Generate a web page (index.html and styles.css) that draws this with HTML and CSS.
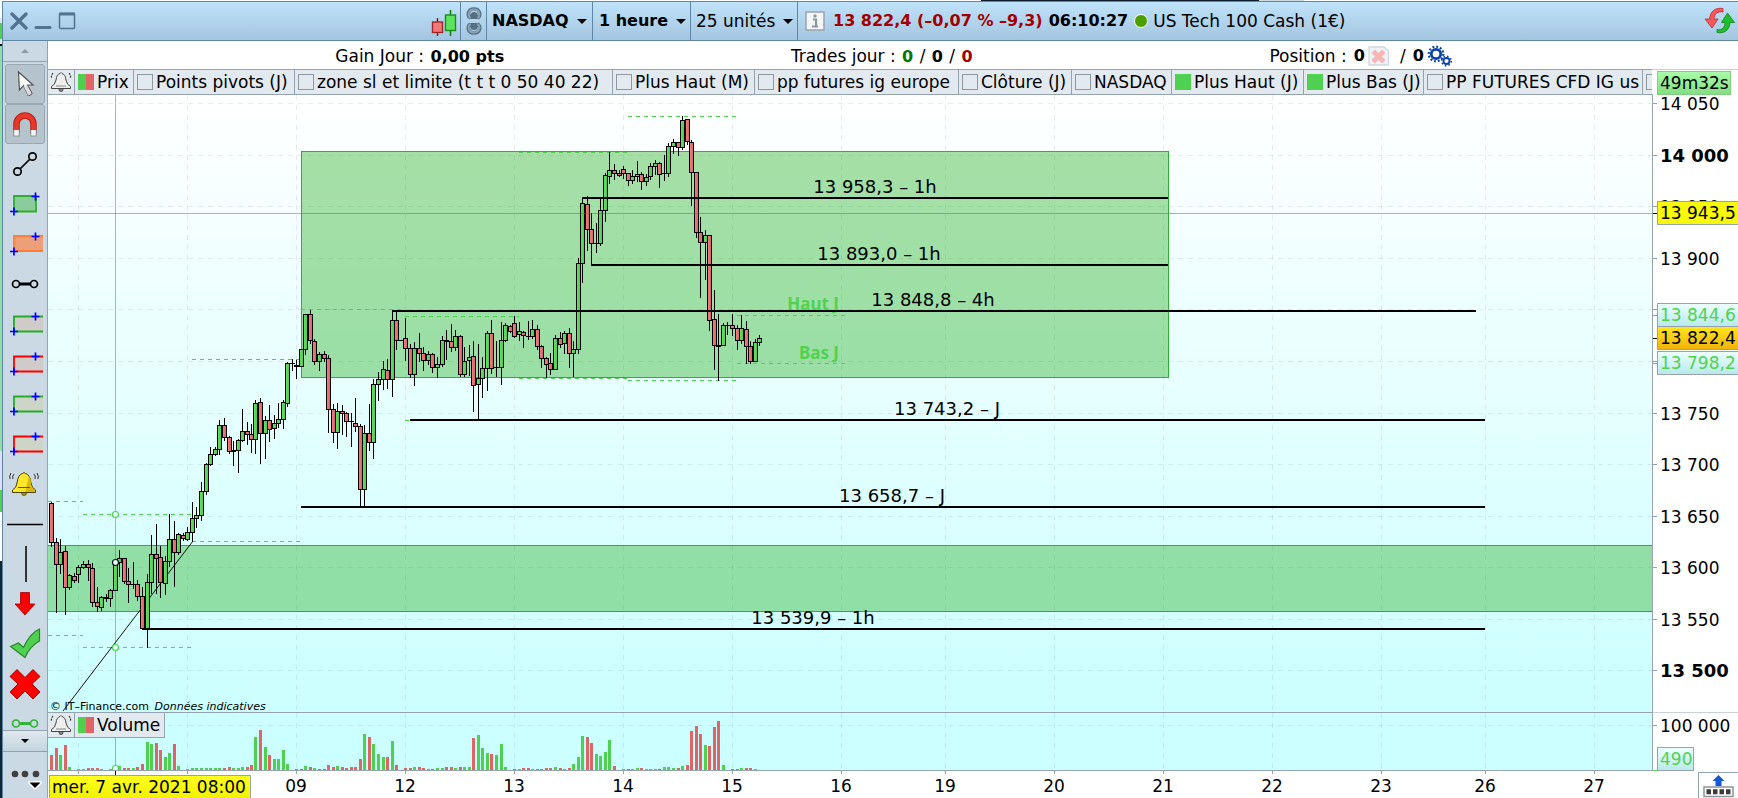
FILE: index.html
```html
<!DOCTYPE html>
<html lang="fr">
<head>
<meta charset="utf-8">
<title>NASDAQ - 1 heure</title>
<link rel="stylesheet" href="styles.css">
</head>
<body>
<div class="window">
  <header class="titlebar">
    <div class="window-controls">
      <button class="plain" aria-label="Fermer"><svg width="18" height="18"><path d="M2 2L16 16M16 2L2 16" stroke="#50748f" stroke-width="3.4" stroke-linecap="round"/></svg></button>
      <button class="plain" aria-label="Réduire"><svg width="18" height="18"><path d="M2 15.500H16" stroke="#50748f" stroke-width="3" stroke-linecap="round"/></svg></button>
      <button class="plain" aria-label="Agrandir"><svg width="18" height="18"><rect x="1.500" y="1.500" width="15" height="15" rx="1" fill="none" stroke="#50748f" stroke-width="1.500"/><path d="M1 2H17" stroke="#50748f" stroke-width="3"/></svg></button>
    </div>
    <button class="plain style-button" aria-label="Style du graphique"><svg width="26" height="28"><path d="M6.500 9V27" stroke="#8c1a1a" stroke-width="1.500"/><path d="M19.500 1V27" stroke="#128012" stroke-width="1.600"/><rect x="1.500" y="13" width="10" height="10.500" fill="#f07878" stroke="#a32626" stroke-width="1.400"/><rect x="14.500" y="6" width="10" height="15.500" fill="#5ee35e" stroke="#169016" stroke-width="1.400"/></svg></button>
    <button class="plain cell link-cell" aria-label="Lier"><svg width="16" height="30" fill="none"><path d="M4.500 12C1 10 1.500 3 8 3s7 7 3.500 9M6.200 13V9.500a1.800 1.800 0 0 1 3.600 0V13" stroke="#566f82" stroke-width="3.600"/><path d="M4.500 12C1.500 10 2 3.500 8 3.500s6.500 6.500 3.500 8.500" stroke="#8aa3b5" stroke-width="2"/><path d="M4.500 18C1 20 1.500 27 8 27s7-7 3.500-9M6.200 17v3.500a1.800 1.800 0 0 0 3.600 0V17" stroke="#566f82" stroke-width="3.600"/><path d="M4.500 18C1.500 20 2 26.500 8 26.500s6.500-6.500 3.500-8.500" stroke="#8aa3b5" stroke-width="2"/></svg></button>
    <button class="plain cell bold symbol-cell">NASDAQ<i class="caret"></i></button>
    <button class="plain cell bold period-cell">1 heure<i class="caret"></i></button>
    <button class="plain cell units-cell">25 unités<i class="caret"></i></button>
    <div class="cell quote">
      <button class="plain" aria-label="Informations"><svg width="20" height="20"><rect x="1" y="1" width="18" height="18" fill="#f4f5f6" stroke="#9aa4aa" stroke-width="1.500"/><path d="M8 8.500h3v7M7 15.500h6" fill="none" stroke="#8a979f" stroke-width="2.200"/><circle cx="10" cy="5" r="1.700" fill="#8a979f"/></svg></button>
      <span class="bold down">13 822,4 (–0,07 % –9,3)</span>
      <span class="bold">06:10:27</span>
      <span class="status"></span>
      <span>US Tech 100 Cash (1€)</span>
    </div>
    <button class="plain refresh" aria-label="Actualiser"><svg width="32" height="28"><path d="M19 1.500C11 0 6 5 5.500 12H1l7 9 6-9H10c0-5 4-8 9-7z" fill="#f4585c" stroke="#c8262e" stroke-width=".8"/><path d="M13 25.500c8 1.500 12.500-3 13-10h4.500l-7-9.500-6 9.500H21c0 5-3 8-8 7z" fill="#1fbf2c" stroke="#10801a" stroke-width=".8"/></svg></button>
  </header>

  <div class="main">
    <nav class="tools" aria-label="Outils">
      <button class="plain scroll-up" aria-label="Monter"><i class="up"></i></button>
      <div class="tool-list">
        <button class="plain tool on" aria-label="Pointeur"><svg width="40" height="40"><path d="M13.500 8l1 18 4-4.500 4.500 9.500q2 1 4-1.500L22.500 21h5.500z" fill="#fff" stroke="#555" stroke-width="1.200"/><path d="M18.500 22l4.500 9 3.500-1.500-4.500-8.500z" fill="#ddd"/></svg></button>
        <button class="plain tool on" aria-label="Aimant"><svg width="40" height="40" fill="none"><path d="M11.500 29V20a8.500 8.500 0 0 1 17 0v9" stroke="#b51d12" stroke-width="6.500"/><path d="M11.500 28V20a8.500 8.500 0 0 1 17 0v8" stroke="#e8382b" stroke-width="4.500"/><path d="M11.500 26v6.500M28.500 26v6.500" stroke="#8d9499" stroke-width="6.500"/><path d="M11.500 26v5.500M28.500 26v5.500" stroke="#f5f5f5" stroke-width="4.500"/></svg></button>
        <button class="plain tool" aria-label="Segment"><svg width="40" height="40" fill="none" stroke="#000" stroke-width="1.700"><path d="M15.500 24.500L24.500 15.500"/><circle cx="12.500" cy="27.500" r="3.700"/><circle cx="27.500" cy="12.500" r="3.700"/></svg></button>
        <button class="plain tool" aria-label="Rectangle vert"><svg width="40" height="40"><path d="M9 12H31V27.500H9z" fill="#8ccb9b" stroke="#2eae2e" stroke-width="1.800"/><path d="M5 27.500h8M9 23.500v8M26.500 12.500h8M30.500 8.500v8" stroke="#00f" stroke-width="1.700"/></svg></button>
        <button class="plain tool" aria-label="Zone orange"><svg width="40" height="40"><path d="M9 12H38V27H9z" fill="#ed9f7a"/><path d="M38 12H9V27H38" fill="none" stroke="#ff7d35" stroke-width="1.800"/><path d="M5 27.500h8M9 23.500v8M26.500 12.500h8M30.500 8.500v8" stroke="#00f" stroke-width="1.700"/></svg></button>
        <button class="plain tool" aria-label="Segment horizontal"><svg width="40" height="40" fill="none" stroke="#000"><path d="M14.500 20H25" stroke-width="3"/><circle cx="11" cy="20" r="3.500" stroke-width="1.700"/><circle cx="29" cy="20" r="3.500" stroke-width="1.700"/></svg></button>
        <button class="plain tool" aria-label="Zone verte 1"><svg width="40" height="40"><path d="M38 12.500H9V27.500H38" fill="#cfcbc8" stroke="#25ad25" stroke-width="1.800"/><path d="M5 27.500h8M9 23.500v8M26.500 12.500h8M30.500 8.500v8" stroke="#00f" stroke-width="1.700"/></svg></button>
        <button class="plain tool" aria-label="Zone rouge 1"><svg width="40" height="40"><path d="M38 12.500H9V27.500H38" fill="#cfcbc8" stroke="#f00" stroke-width="1.800"/><path d="M5 27.500h8M9 23.500v8M26.500 12.500h8M30.500 8.500v8" stroke="#00f" stroke-width="1.700"/></svg></button>
        <button class="plain tool" aria-label="Zone verte 2"><svg width="40" height="40"><path d="M38 12.500H9V27.500H38" fill="#cdd5c6" stroke="#25ad25" stroke-width="1.800"/><path d="M5 27.500h8M9 23.500v8M26.500 12.500h8M30.500 8.500v8" stroke="#00f" stroke-width="1.700"/></svg></button>
        <button class="plain tool" aria-label="Zone rouge 2"><svg width="40" height="40"><path d="M38 12.500H9V27.500H38" fill="#cdd5c6" stroke="#f00" stroke-width="1.800"/><path d="M5 27.500h8M9 23.500v8M26.500 12.500h8M30.500 8.500v8" stroke="#00f" stroke-width="1.700"/></svg></button>
        <button class="plain tool" aria-label="Alerte"><svg width="40" height="40"><circle cx="19" cy="29" r="2.500" fill="#a8920c" stroke="#554900" stroke-width=".7"/><path d="M7.500 28.500V26q4-2 4.500-7 1-8.500 5.500-9.500 1.500-2 3 0 4.500 1 5.500 9.500.500 5 4.500 7v2.500z" fill="#ffe629" stroke="#4d4300" stroke-width="1"/><path d="M24 12q2 3 2 8 .500 4 4 6v2H20z" fill="#d8b90d"/><path d="M13 23.500H25" stroke="#665900"/><path d="M6 9q-2 3-1 6M9 10q-2 2-1 5M32 9q2 3 1 6M29 10q2 2 1 5" fill="none" stroke="#333" stroke-width="1"/></svg></button>
        <button class="plain tool" aria-label="Ligne horizontale"><svg width="40" height="40"><path d="M2 20.500H38" stroke="#000" stroke-width="1.500"/></svg></button>
        <button class="plain tool" aria-label="Ligne verticale"><svg width="40" height="40"><path d="M21 2V38" stroke="#000" stroke-width="1.500"/></svg></button>
        <button class="plain tool" aria-label="Flèche"><svg width="40" height="40"><path d="M15.500 8.500h9V20H30l-10 11L10 20h5.500z" fill="#f80000" stroke="#a00000" stroke-width=".8"/></svg></button>
        <button class="plain tool" aria-label="Valider"><svg width="40" height="40"><path d="M5.500 22.500l8-3.500 5 4.500Q25 9 34.500 5v12Q25 22 20 33.500z" fill="#4fd04f" stroke="#27862b" stroke-width="1.200"/></svg></button>
        <button class="plain tool" aria-label="Supprimer"><svg width="40" height="40"><path d="M12 5.500l8 8 8-8 7 7-8 7.500 8 8-7 7-8-8-8 8-7-7 8-8-8-7.500z" fill="#f00" stroke="#900" stroke-width=".9"/></svg></button>
        <button class="plain tool" aria-label="Segment vert"><svg width="40" height="40" fill="none" stroke="#34b437"><path d="M14.500 19.500H25" stroke-width="3"/><circle cx="11" cy="19.500" r="3.500" stroke-width="1.700"/><circle cx="29" cy="19.500" r="3.500" stroke-width="1.700"/></svg></button>
      </div>
      <button class="plain scroll-down" aria-label="Descendre"><i class="caret small"></i></button>
      <button class="plain more" aria-label="Plus d'outils"><svg width="44" height="46"><g fill="#404040"><circle cx="12" cy="22" r="3.300"/><circle cx="22" cy="22" r="3.300"/><circle cx="33" cy="22" r="3.300"/></g><path d="M26.500 30.500h11l-5.500 5.500z" fill="#000" stroke="#fff" stroke-width="3" paint-order="stroke" stroke-linejoin="round"/></svg></button>
    </nav>

    <section class="content">
      <div class="summary">
        <div>Gain Jour : <b>0,00 pts</b></div>
        <div>Trades jour : <b class="up-count">0</b> / <b>0</b> / <b class="down-count">0</b></div>
        <div class="position">Position : <b>0</b>
          <button class="plain" aria-label="Fermer la position"><svg width="22" height="20"><path d="M1 1h15l4.500 4v14H1z" fill="#eef3f7" stroke="#cdd9e2" stroke-width="1.300"/><path d="M7 3.500l3.500 3.500 3.500-3.500 3.500 3.500L14 10.500l3.500 3.500-3.500 3.500-3.500-3.500L7 17.500 3.500 14 7 10.500 3.500 7z" fill="#fab4b4"/></svg></button>
          <span class="slash">/</span><b>0</b>
          <button class="plain" aria-label="Réglages"><svg width="26" height="22" fill="none" stroke="#0b43a8"><circle cx="9" cy="9" r="4.700" stroke-width="2.800"/><circle cx="9" cy="9" r="7.300" stroke-width="2.200" stroke-dasharray="1.900 1.920"/><circle cx="19.500" cy="16" r="3" stroke-width="1.800"/><circle cx="19.500" cy="16" r="4.700" stroke-width="1.700" stroke-dasharray="1.500 2.190"/></svg></button>
        </div>
      </div>

      <div class="board">
        <div class="left">
          <div class="tabs">
            <button class="plain tab bell" aria-label="Alerte prix"><svg width="24" height="24"><use href="#bell"/></svg></button>
            <label class="tab"><input type="checkbox" class="dual" checked>Prix</label>
            <label class="tab"><input type="checkbox">Points pivots (J)</label>
            <label class="tab"><input type="checkbox">zone sl et limite (t t t 0 50 40 22)</label>
            <label class="tab"><input type="checkbox">Plus Haut (M)</label>
            <label class="tab"><input type="checkbox">pp futures ig europe</label>
            <label class="tab"><input type="checkbox">Clôture (J)</label>
            <label class="tab"><input type="checkbox">NASDAQ</label>
            <label class="tab"><input type="checkbox" checked>Plus Haut (J)</label>
            <label class="tab"><input type="checkbox" checked>Plus Bas (J)</label>
            <label class="tab"><input type="checkbox">PP FUTURES CFD IG us</label>
            <label class="tab"><input type="checkbox" aria-label="Indicateur"></label>
          </div>
          <div class="price-pane">
            <svg class="plot"><g id="price" transform="translate(-48 -95)"></g></svg>
          </div>
          <div class="volume-pane">
            <svg class="plot"><g id="volume" transform="translate(-48 -713)"></g></svg>
            <div class="volume-title">
              <button class="plain tab bell" aria-label="Alerte volume"><svg width="24" height="24"><use href="#bell"/></svg></button>
              <label class="tab"><input type="checkbox" class="dual" checked>Volume</label>
            </div>
          </div>
        </div>
        <aside class="scale"><svg class="plot"><g id="scale" transform="translate(-1652 -69)"></g></svg></aside>
      </div>

      <footer class="dates">
        <svg class="plot"><g id="dates" transform="translate(-48 -771)"></g></svg>
        <div class="date-mark">mer. 7 avr. 2021 08:00</div>
        <button class="plain keyboard" aria-label="Afficher le panneau"><svg width="32" height="24"><path d="M15.500 1l6 6h-3v5h-6V7h-3z" fill="#1257d6"/><rect x="1" y="13" width="29" height="9.500" fill="#fff" stroke="#8a959c" stroke-width="1.500"/><path d="M3.500 17.800h24" stroke="#3b3b3b" stroke-width="5" stroke-dasharray="4.500 2"/></svg></button>
      </footer>
    </section>
  </div>
</div>
<svg class="defs" width="0" height="0"><defs>
  <symbol id="bell" viewBox="0 0 24 24"><circle cx="12" cy="19.500" r="2" fill="#888" stroke="#333" stroke-width=".8"/><path d="M2.500 18.500v-2Q6 15 7 10q.500-5.500 4-6.500 1-2 2 0 3.500 1 4 6.500 1 5 4.500 6.500v2z" fill="#eee" stroke="#444" stroke-width="1"/><path d="M7 16H17" stroke="#888"/><path d="M4 3Q2 5.500 2.500 8M20 3q2 2.500 1.500 5" fill="none" stroke="#333" stroke-width="1.200" stroke-dasharray="2 1"/></symbol>
  <linearGradient id="up"><stop offset="0" stop-color="#6ee06e"/><stop offset="1" stop-color="#44cc44"/></linearGradient>
  <linearGradient id="down"><stop offset="0" stop-color="#f08585"/><stop offset="1" stop-color="#de5c5c"/></linearGradient>
  <linearGradient id="tag-blue" x2="0" y2="1"><stop offset="0" stop-color="#eeffff"/><stop offset="1" stop-color="#b9e8ea"/></linearGradient>
  <linearGradient id="tag-gold" x2="0" y2="1"><stop offset="0" stop-color="#ffe61f"/><stop offset="1" stop-color="#f0b208"/></linearGradient>
  <linearGradient id="tag-green" x2="0" y2="1"><stop offset="0" stop-color="#a9fda9"/><stop offset="1" stop-color="#84dc84"/></linearGradient>
</defs></svg>
<script src="chart.js"></script>
</body>
</html>
```
FILE: styles.css
```css
* { box-sizing: border-box; }

body {
  margin: 0;
  height: 100vh;
  padding: 1px 0 0 2px;
  overflow: hidden;
  display: flex;
  background:
    linear-gradient(90deg, #fff 981px, #0c1c2c 981px 1259px, #cddbe3 1259px 1304px, #fff 1304px) 0 0 / 100% 1px no-repeat,
    linear-gradient(#fff 18px, #dfe8ee 18px 23px, #4fd04f 23px 39px, #dfe8ee 39px 44px, #000 44px 46px, #92dfa6 46px 451px, #ddf 451px 490px, #4fd04f 490px 512px, #fff 512px 561px, #0f2633 561px);
  color: #000;
  font: 17px/22px "DejaVu Sans", Verdana, sans-serif;
}

.window {
  flex: 1;
  min-width: 0;
  display: flex;
  flex-direction: column;
  border-top: 1px solid #5f87a5;
  border-left: 1px solid #5f87a5;
}

.plain {
  display: flex;
  align-items: center;
  margin: 0;
  padding: 0;
  border: 0;
  background: none;
  color: inherit;
  font: inherit;
  white-space: nowrap;
}

svg { display: block; }
.defs { position: absolute; }
.bold, b { font-weight: bold; font-size: 16px; }

.titlebar {
  flex: none;
  display: flex;
  height: 39px;
  background: linear-gradient(#bfe3fb, #a4c5df);
  border-bottom: 1px solid #5f87a5;
}
.window-controls {
  flex: 0 0 427px;
  display: flex;
  gap: 6px;
  padding-left: 7px;
}
.style-button { flex: 0 0 30px; padding: 4px 0 0 1px; }
.cell {
  flex: none;
  border-left: 1px solid #5f87a5;
  padding-left: 5px;
}
.caret {
  margin-left: 8px;
  border: 5px solid transparent;
  border-top-color: #000;
  border-bottom: 0;
}
.caret.small { margin: 0; border-width: 4px 4px 0; }
.link-cell { width: 26px; }
.symbol-cell { width: 106px; }
.period-cell { width: 98px; padding-left: 6px; }
.units-cell { width: 107px; }
.quote {
  display: flex;
  align-items: center;
  gap: 6px;
  padding-left: 7px;
  white-space: nowrap;
}
.down { margin-left: 2px; color: #a00000; }
.status {
  width: 14px;
  height: 14px;
  margin-right: -1px;
  border: 1px solid #fff;
  border-radius: 50%;
  background: #4ba000;
}
.refresh { margin-left: auto; padding-right: 2px; }

.main { flex: 1; min-height: 0; display: flex; }

.tools {
  flex: 0 0 45px;
  display: flex;
  flex-direction: column;
  background: #cad9e3;
  border-right: 1px solid #94a3ad;
}
.scroll-up {
  height: 21px;
  justify-content: center;
  border-bottom: 1px solid #94a3ad;
}
.up { border: 4px solid transparent; border-bottom-color: #8d9aa3; border-top: 0; }
.tool-list { flex: 1; min-height: 0; overflow: hidden; padding: 2px; }
.tool { height: 40px; width: 40px; border: 1px solid transparent; border-radius: 3px; }
.tool svg { margin: -1px; }
.tool.on { background: #b4c3cc; border-color: #98a8b2; }
.scroll-down {
  flex: 0 0 22px;
  justify-content: center;
  background: linear-gradient(#dfe9f0, #c4d4de);
  border: solid #94a3ad;
  border-width: 1px 0;
}
.more { flex: 0 0 45px; }

.content { flex: 1; min-width: 0; display: flex; flex-direction: column; background: #fff; }
.summary {
  flex: 0 0 28px;
  display: grid;
  grid-template-columns: 456fr 479fr 469fr;
  align-items: center;
  padding: 2px 0 0 17%;
  white-space: nowrap;
}
.summary b { margin: 0 1px; }
.up-count { color: #007800; }
.down-count { color: #a00000; }
.position { display: flex; align-items: center; gap: 2px; }
.summary .position b { margin-left: 5px; }
.position .slash { margin-left: 8px; }

.board { flex: 1; min-height: 0; display: flex; }
.left { flex: 1; min-width: 0; display: flex; flex-direction: column; }
.scale { flex: 0 0 86px; min-height: 0; overflow: hidden; }
.plot { width: 100%; height: 100%; overflow: hidden; }

.tabs {
  flex: 0 0 26px;
  display: grid;
  grid-template-columns: 26px 59px 161px 318px 142px 204px 113px 100px 132px 120px 219px 1fr;
  overflow: hidden;
  background: #e2eaf0;
  border: solid #94a3ad;
  border-width: 1px 0;
}
.tab {
  display: flex;
  align-items: center;
  gap: 3px;
  padding-left: 3px;
  white-space: nowrap;
}
.tab + .tab { border-left: 1px solid #94a3ad; }
.bell { padding-left: 1px; }
input[type="checkbox"] {
  appearance: none;
  flex: none;
  width: 16px;
  height: 16px;
  margin: 0;
  border: 1px solid #8e989f;
}
input[type="checkbox"]:checked { border: 0; background: #4fd050; }
input.dual:checked { background: linear-gradient(90deg, #4fd050 50%, #e06466 50%); }

.price-pane { flex: 1 1 0; min-height: 0; overflow: hidden; background: linear-gradient(#fff, #ccffff); }
.volume-pane {
  position: relative;
  flex: 0 0 59px;
  min-height: 0;
  background: #ccffff;
  border: solid #94a3ad;
  border-width: 1px 0;
}
.volume-title {
  position: absolute;
  top: 0;
  left: 0;
  display: flex;
  height: 25px;
  background: #e2eaf0;
  border: solid #94a3ad;
  border-width: 0 1px 1px 0;
}
.volume-title .bell { width: 26px; }
.volume-title label { padding-right: 4px; }

.dates { position: relative; flex: 0 0 27px; min-height: 0; }
.date-mark {
  position: absolute;
  left: 1px;
  bottom: 0;
  padding: 0 4px 0 2px;
  background: linear-gradient(#ffff20, #f1f100);
  border: 1px solid #94a3ad;
  border-bottom: 0;
}
.keyboard {
  position: absolute;
  right: 0;
  top: 1px;
  width: 40px;
  height: 26px;
  padding-left: 4px;
  background: #fff;
  border: solid #94a3ad;
  border-width: 1px 0 0 1px;
}

.grid { stroke: #000; stroke-opacity: .08; stroke-dasharray: 5 5; }
.day-level { stroke: #4fd050; stroke-dasharray: 4 4; }
.zone { fill: rgb(44 178 38 / .41); stroke: #2eb035; }
.level { stroke: #000; stroke-width: 2; }
.level-text { font-size: 18px; text-anchor: middle; }
.day-text { font: bold 17px "Noto Sans", sans-serif; text-anchor: end; fill: #50d250; }
.cross { stroke: #ff2020; stroke-opacity: .48; }
.credit { font-size: 11px; }
.credit tspan { font-style: italic; }
.tick { stroke: #94a3ad; }
.round { font-size: 18px; font-weight: bold; }
.tag { stroke: #94a3ad; }
.green-text { fill: #50d250; }
.date { text-anchor: middle; }
```
FILE: chart.js
```js
const NS = "http://www.w3.org/2000/svg";
function add(parent, tag, attrs, text) {
  const el = document.createElementNS(NS, tag);
  for (const k in attrs) el.setAttribute(k, attrs[k]);
  if (text) el.textContent = text;
  parent.appendChild(el);
  return el;
}
const line = (g, x1, y1, x2, y2, c) => add(g, "line", { x1, y1, x2, y2, class: c });

// x, colour, high, body top, body bottom, low
const candles = `51r502,503,542,546 56r538,542,564,612 60g539,552,564,573 65r546,551,587,614 69g574,575,587,589
74r573,576,580,582 78g565,567,574,582 83g561,564,567,568 88r560,564,567,580 92r563,568,602,606 97r587,602,606,611
101g596,597,607,610 106d594,597,598,601 110g589,590,598,606 115g561,562,590,590 119g550,558,562,576
124r558,558,581,583 128r568,581,584,602 133d562,584,584,588 137r580,584,596,600 142r587,596,628,629
147g574,582,628,647 151g535,554,582,593 156r524,554,558,593 160r546,557,582,597 165g556,561,583,594
169g514,539,561,566 174r521,539,552,586 178g533,534,552,554 183r533,535,538,540 187g527,532,539,540
192g502,518,532,541 196g507,515,518,527 201g482,491,515,520 206g463,464,491,494 210g447,454,464,465
215g447,449,454,455 219g420,425,449,454 224r418,425,437,440 229r436,437,451,453 233d441,450,451,465
238g439,440,450,472 242g409,431,440,441 247r422,431,434,444 251r424,434,439,452 255g400,403,439,453
260r398,402,433,463 265g416,420,433,458 269r405,420,429,441 274g415,423,428,438 278g403,419,423,427
283g400,402,419,428 287g362,363,403,406 292d359,363,363,370 296d360,365,366,378 301g349,349,366,366
305g314,314,349,354 310r310,314,340,343 314r339,341,361,364 319g352,354,361,370 324r351,354,358,361
328r355,358,409,432 333r404,409,432,442 337g403,411,432,448 342r405,411,413,434 346r412,413,421,436
351d413,421,421,446 355r398,423,426,431 360r424,426,489,507 364g425,433,489,507 369r404,433,442,450
373g379,384,442,458 378g372,379,384,400 383g361,369,379,389 387r359,370,379,388 392g311,320,379,396
396r311,320,340,349 401d340,340,340,340 405r318,338,348,360 410r344,348,374,377 414g342,348,374,385
419r333,348,353,361 423r347,353,360,370 428g351,354,360,364 432r353,354,367,372 437g357,364,367,377
442g336,340,364,366 446d330,340,341,359 451r324,341,347,351 455g330,336,347,350 460r335,336,374,376
464g347,361,374,376 469g345,357,360,375 473r341,356,385,411 478g344,378,384,419 482g357,368,378,397
487g331,333,368,390 491r320,333,368,373 496d341,367,367,376 501g322,340,367,384 505g323,325,340,341
510r325,326,331,332 514r316,323,336,337 519g322,331,334,340 523r331,332,335,347 528d321,336,336,339
532g320,329,336,338 537r325,329,346,349 541r345,346,358,367 546r357,358,364,377 550r353,363,369,374
555g335,338,369,369 560r332,338,344,347 564g331,333,343,353 569r328,333,353,367 573g341,349,353,376
578g258,263,349,353 582g197,203,263,282 587r196,204,229,250 591r213,229,243,265 596d223,243,243,252
600g197,210,243,245 605g173,175,210,221 609g152,170,176,183 614r164,170,173,179 619r170,173,175,176
623r166,169,173,178 628r173,173,180,185 632g170,176,180,183 637g161,174,176,181 641r172,174,181,189
646g174,177,181,185 650g163,166,176,179 655g160,163,166,174 659r162,163,174,187 664d155,173,173,180
668g143,146,173,176 673g139,142,146,153 678r142,142,147,155 682g116,120,147,149 687r119,119,141,144
691r140,142,172,205 696r172,172,232,237 700r217,232,242,297 705g230,235,242,279 709r235,235,320,330
714r290,319,345,369 718d314,345,346,380 723g323,325,345,345 727d322,325,325,334 732r314,325,328,335
737r325,328,340,349 741g315,328,340,343 746r321,329,346,363 750r341,346,361,363 755g339,342,361,361
759g335,338,342,345`;

// x, colour, bar height
const volumes = `51r15 56r22 60g15 65r25 69g3 78g1 83g1 88r2 92r2 97r2 101g1 110g1 115g2 119g4 124r2 128r2 133g2
137r3 142r6 147g28 151g26 156r27 160r20 165g13 169g17 174r26 178g4 187g1 192g2 196g2 201g2 206g2 210g2 215g2
219g2 224r2 229r3 233g2 238g2 242g3 247r3 251r5 255g33 260r40 265g23 269r15 274g11 278g11 283g20 287g6 296r1
301r1 305g4 310r3 314g2 319r1 324r1 328r5 333r3 337g4 342r3 346r2 351r3 355r3 360r11 364g36 369r33 373g26
378g16 383g13 387r13 392g29 396r5 405r2 410r2 414g3 419r3 423r2 428g1 432r1 437g2 442g2 446r3 451r3 455g2
460r3 464g3 469g3 473r32 478g35 482g22 487g17 491r16 496g15 501g26 505g3 514r1 519g1 523r2 528r2 532g1
537r1 541r1 546r2 550r2 555g3 560r2 564g1 569r2 573g6 578g13 582g34 587r33 591r27 596g16 600g14 605g18
609g30 614r4 623g1 628r1 632g1 637g2 641r2 646g1 650g1 655g1 659r1 664g3 668g3 673g2 678r2 682g4 687r5
691r39 696r44 700r36 705g25 709r24 714r43 718r49 723g5 732r1 737r1 741g2 746r2 750r2 755g1`;

const END = 4000;
const days = [[78], [187], [296, "09"], [405, "12"], [514, "13"], [623, "14"], [732, "15"], [841, "16"], [945, "19"],
  [1054, "20"], [1163, "21"], [1272, "22"], [1381, "23"], [1485, "26"], [1594, "27"]];
const prices = [[103, "14 050"], [155, "14 000"], [206, "13 950"], [258, "13 900"], [309, "13 850"], [361, ""],
  [413, "13 750"], [464, "13 700"], [516, "13 650"], [567, "13 600"], [619, "13 550"], [670, "13 500"]];

const price = document.getElementById("price");
for (const [x] of days) line(price, x + .5, 95, x + .5, 712, "grid");
for (const [y] of prices) line(price, 48, y + .5, END, y + .5, "grid");
add(price, "rect", { x: 301.5, y: 151.5, width: 867, height: 226, class: "zone" });
add(price, "rect", { x: 40, y: 545.5, width: END, height: 66, class: "zone" });
line(price, 63, 711, 193, 541, "tick").style.stroke = "#111";
line(price, 115.5, 95, 115.5, 712, "cross");
for (const [y, a, b] of [[501, 48, 83], [635, 48, 83], [514, 83, 191], [647, 83, 191], [359, 192, 301], [541, 192, 301],
  [309, 301, 401], [316, 405, 519], [420, 405, 410], [152, 519, 627], [378, 519, 627], [116, 628, 736],
  [380, 628, 736], [315, 737, 845], [363, 737, 845]]) line(price, a, y + .5, b, y + .5, "day-level");
add(price, "text", { x: 839, y: 310, class: "day-text" }, "Haut J");
add(price, "text", { x: 839, y: 359, class: "day-text" }, "Bas J");
for (const [, x, c, h, t, b, l] of candles.matchAll(/(\d+)([rgd])(\d+),(\d+),(\d+),(\d+)/g)) {
  add(price, "rect", { x, y: h, width: 1, height: l - h + 1 });
  if (c === "d") add(price, "rect", { x: x - 2, y: t, width: 5, height: b - t + 1 });
  else add(price, "rect", { x: x - 1.5, y: +t + .5, width: 4, height: b - t, stroke: "#000", fill: c === "g" ? "url(#up)" : "url(#down)" });
}
for (const [y, a, b, tx, t] of [[198, 582, 1168, 875, "13 958,3 – 1h"], [265, 591, 1168, 879, "13 893,0 – 1h"],
  [311, 392, 1476, 933, "13 848,8 – 4h"], [420, 410, 1485, 947, "13 743,2 – J"], [507, 301, 1485, 892, "13 658,7 – J"],
  [629, 142, 1485, 813, "13 539,9 – 1h"]]) {
  line(price, a, y, b, y, "level");
  add(price, "text", { x: tx, y: y - 5, class: "level-text" }, t);
}
line(price, 48, 213.5, END, 213.5, "cross");
for (const [cy, s, f] of [[514.5, "#50d250", "#e8ffff"], [562.5, "#111", "#e8ffff"], [647.5, "#50d250", "#e8ffff"]])
  add(price, "circle", { cx: 115.5, cy, r: 3, fill: f, stroke: s, "stroke-width": 1.2 });
const credit = add(price, "text", { x: 50, y: 710, class: "credit" }, "© IT–Finance.com ");
add(credit, "tspan", { dx: 2 }, "Données indicatives");

const volume = document.getElementById("volume");
for (const [x] of days) line(volume, x + .5, 713, x + .5, 770, "grid");
line(volume, 48, 725.5, END, 725.5, "grid");
for (const [, x, c, h] of volumes.matchAll(/(\d+)([rg])(\d+)/g))
  add(volume, "rect", { x: x - 1, y: 770 - h, width: 3, height: h, fill: c === "g" ? "#4fd050" : "#de6466" });
line(volume, 115.5, 713, 115.5, 770, "cross");
add(volume, "circle", { cx: 115.5, cy: 768.5, r: 3, fill: "#e8ffff", stroke: "#50d250", "stroke-width": 1.2 });

const scale = document.getElementById("scale");
line(scale, 1652.5, 94, 1652.5, 771, "tick");
line(scale, 1652, 69.5, 1738, 69.5, "tick").style.strokeOpacity = .5;
line(scale, 1653, 712.5, 1738, 712.5, "tick").style.strokeOpacity = .5;
for (const [y, t] of prices.concat([[725, "100 000"]])) {
  line(scale, 1653, y + .5, 1657, y + .5, "tick");
  const round = t === "14 000" || t === "13 500";
  if (t) add(scale, "text", { x: 1660, y: y + 7, class: round ? "round" : "" }, t);
}
for (const [y, t, f, c, w, s, k] of [[71, "49m32s", "url(#tag-green)", "", 73, "#80d080"], [201, "13 943,5", "#f8f80c", "", 90, "", "#000"],
  [303, "13 844,6", "url(#tag-blue)", "green-text", 90, "", "#50d250"], [351, "13 798,2", "url(#tag-blue)", "green-text", 90, "", "#50d250"],
  [326, "13 822,4", "url(#tag-gold)", "", 90, "", "#000"], [747, "490", "url(#tag-blue)", "green-text", 36, "", "#50d250"]]) {
  const box = add(scale, "rect", { x: 1657.5, y: y + .5, width: w, height: 23, fill: f, class: "tag" });
  if (s) box.style.stroke = s;
  const my = y === 747 ? 770.5 : y + 12.5;
  if (k) line(scale, 1653, my, 1657, my, "tick").style.stroke = k;
  add(scale, "text", { x: 1660, y: y + 18, class: c }, t);
}

const dates = document.getElementById("dates");
for (const [x, t] of days) {
  line(dates, x + .5, 771, x + .5, 774, "tick");
  if (t) add(dates, "text", { x, y: 792, class: "date" }, t);
}
line(dates, 115.5, 771, 115.5, 776, "tick").style.stroke = "#000";
```
